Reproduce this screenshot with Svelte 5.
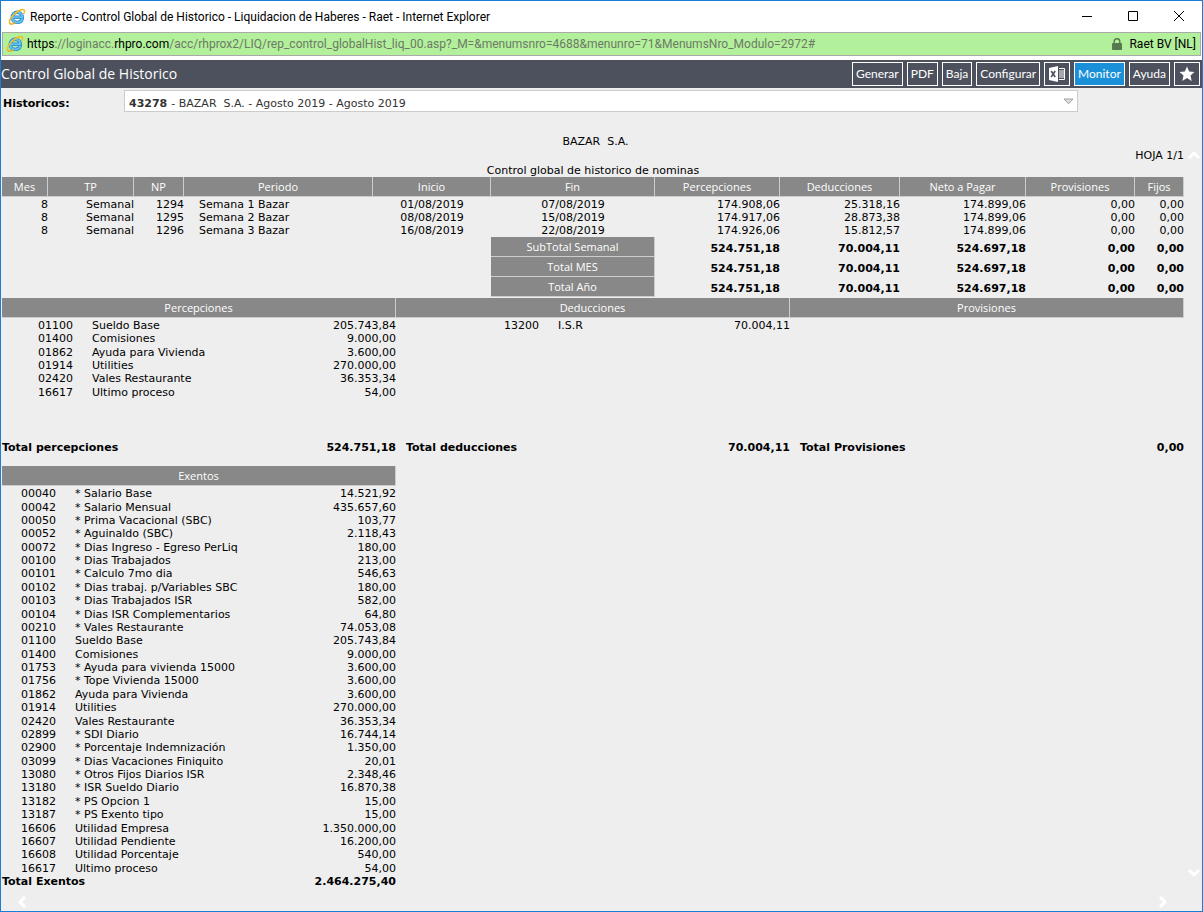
<script>
  const columns = [
    { name: 'Mes', width: 46 },
    { name: 'TP', width: 86 },
    { name: 'NP', width: 50 },
    { name: 'Periodo', width: 189 },
    { name: 'Inicio', width: 118 },
    { name: 'Fin', width: 164 },
    { name: 'Percepciones', width: 125 },
    { name: 'Deducciones', width: 120 },
    { name: 'Neto a Pagar', width: 126 },
    { name: 'Provisiones', width: 109 },
    { name: 'Fijos', width: 49 },
  ];

  const periods = [
    ['8', 'Semanal', '1294', 'Semana 1 Bazar', '01/08/2019', '07/08/2019', '174.908,06', '25.318,16', '174.899,06', '0,00', '0,00'],
    ['8', 'Semanal', '1295', 'Semana 2 Bazar', '08/08/2019', '15/08/2019', '174.917,06', '28.873,38', '174.899,06', '0,00', '0,00'],
    ['8', 'Semanal', '1296', 'Semana 3 Bazar', '16/08/2019', '22/08/2019', '174.926,06', '15.812,57', '174.899,06', '0,00', '0,00'],
  ];

  const totals = ['SubTotal Semanal', 'Total MES', 'Total Año'];
  const totalValues = ['524.751,18', '70.004,11', '524.697,18', '0,00', '0,00'];

  const groups = [
    {
      name: 'Percepciones',
      kind: 'perc',
      rows: [
        ['01100', 'Sueldo Base', '205.743,84'],
        ['01400', 'Comisiones', '9.000,00'],
        ['01862', 'Ayuda para Vivienda', '3.600,00'],
        ['01914', 'Utilities', '270.000,00'],
        ['02420', 'Vales Restaurante', '36.353,34'],
        ['16617', 'Ultimo proceso', '54,00'],
      ],
      label: 'Total percepciones',
      total: '524.751,18',
    },
    {
      name: 'Deducciones',
      kind: 'dedu',
      rows: [['13200', 'I.S.R', '70.004,11']],
      label: 'Total deducciones',
      total: '70.004,11',
    },
    { name: 'Provisiones', kind: 'prov', rows: [], label: 'Total Provisiones', total: '0,00' },
  ];

  const exempt = [
    ['00040', '* Salario Base', '14.521,92'],
    ['00042', '* Salario Mensual', '435.657,60'],
    ['00050', '* Prima Vacacional (SBC)', '103,77'],
    ['00052', '* Aguinaldo (SBC)', '2.118,43'],
    ['00072', '* Dias Ingreso - Egreso PerLiq', '180,00'],
    ['00100', '* Dias Trabajados', '213,00'],
    ['00101', '* Calculo 7mo dia', '546,63'],
    ['00102', '* Dias trabaj. p/Variables SBC', '180,00'],
    ['00103', '* Dias Trabajados ISR', '582,00'],
    ['00104', '* Dias ISR Complementarios', '64,80'],
    ['00210', '* Vales Restaurante', '74.053,08'],
    ['01100', 'Sueldo Base', '205.743,84'],
    ['01400', 'Comisiones', '9.000,00'],
    ['01753', '* Ayuda para vivienda 15000', '3.600,00'],
    ['01756', '* Tope Vivienda 15000', '3.600,00'],
    ['01862', 'Ayuda para Vivienda', '3.600,00'],
    ['01914', 'Utilities', '270.000,00'],
    ['02420', 'Vales Restaurante', '36.353,34'],
    ['02899', '* SDI Diario', '16.744,14'],
    ['02900', '* Porcentaje Indemnización', '1.350,00'],
    ['03099', '* Dias Vacaciones Finiquito', '20,01'],
    ['13080', '* Otros Fijos Diarios ISR', '2.348,46'],
    ['13180', '* ISR Sueldo Diario', '16.870,38'],
    ['13182', '* PS Opcion 1', '15,00'],
    ['13187', '* PS Exento tipo', '15,00'],
    ['16606', 'Utilidad Empresa', '1.350.000,00'],
    ['16607', 'Utilidad Pendiente', '16.200,00'],
    ['16608', 'Utilidad Porcentaje', '540,00'],
    ['16617', 'Ultimo proceso', '54,00'],
  ];
</script>

{#snippet browserIcon()}
  <svg class="browser" width="18" height="18" viewBox="0 0 18 18" aria-hidden="true">
    <path d="M14.300 10.800c-.6 2.300-2.500 3.600-5 3.600-3 0-5-2-5-5s2.100-5.200 5-5.200c2.900 0 4.800 2 4.900 5H4.800" fill="none" stroke="#2583c9" stroke-width="3.400" />
    <path d="M14.300 10.800c-.6 2.300-2.500 3.600-5 3.600-3 0-5-2-5-5s2.100-5.200 5-5.200c2.900 0 4.800 2 4.900 5H4.800" fill="none" stroke="#62c3f3" stroke-width="2" />
    <path d="M2.300 15.800C.4 14.600 2 10.200 5.900 6.500 10 2.600 14.900.4 16.200 2c.6.700.4 2-.3 3.500" fill="none" stroke="#f7bd1d" stroke-width="1.600" stroke-linecap="round" />
    <path d="M2.300 15.800c.9.700 2.800.2 4.700-.9" fill="none" stroke="#e9a90f" stroke-width="1.400" stroke-linecap="round" />
  </svg>
{/snippet}

{#snippet chevron(d, label)}
  <button class="chevron" aria-label={label}>
    <svg width="12" height="12" viewBox="0 0 12 12" aria-hidden="true">
      <path {d} fill="none" stroke="#fff" stroke-width="3" />
    </svg>
  </button>
{/snippet}

<div class="window">
  <header class="titlebar">
    {@render browserIcon()}
    <span class="title">Reporte - Control Global de Historico - Liquidacion de Haberes - Raet - Internet Explorer</span>
    <div class="controls">
      <button aria-label="Minimizar">
        <svg width="12" height="12" viewBox="0 0 12 12"><path d="M1 5.500h10" stroke="#000" /></svg>
      </button>
      <button aria-label="Maximizar">
        <svg width="12" height="12" viewBox="0 0 12 12"><path d="M1.500 .5h9v9h-9z" fill="none" stroke="#000" /></svg>
      </button>
      <button aria-label="Cerrar">
        <svg width="12" height="12" viewBox="0 0 12 12"><path d="M1 0l10 10M11 0L1 10" stroke="#000" /></svg>
      </button>
    </div>
  </header>

  <div class="address">
    {@render browserIcon()}
    <span class="url"><span class="strong">https</span>://loginacc.<span class="strong">rhpro.com</span>/acc/rhprox2/LIQ/rep_control_globalHist_liq_00.asp?_M=&amp;menumsnro=4688&amp;menunro=71&amp;MenumsNro_Modulo=2972#</span>
    <svg class="lock" width="10" height="12" viewBox="0 0 10 12" aria-hidden="true">
      <path d="M2.200 6V3.500a2.800 2.800 0 0 1 5.600 0V6" fill="none" stroke="#57794f" stroke-width="1.400" />
      <rect x="0" y="5" width="10" height="7" rx="1" fill="#57794f" />
    </svg>
    <span class="cert">Raet BV [NL]</span>
  </div>

  <nav class="toolbar">
    <h1>Control Global de Historico</h1>
    <button>Generar</button>
    <button>PDF</button>
    <button>Baja</button>
    <button>Configurar</button>
    <button class="icon" aria-label="Excel">
      <svg width="18" height="16" viewBox="0 0 18 16" aria-hidden="true">
        <path d="M1 2l9-2v16l-9-2z" fill="#fff" />
        <path d="M3.200 5l4 6M7.200 5l-4 6" stroke="#4d515d" stroke-width="1.600" />
        <path d="M11 2.500h5.500v11H11" fill="none" stroke="#fff" />
        <path d="M11 5h5M11 7h5M11 9h5M11 11h5" stroke="#fff" stroke-width="1" />
      </svg>
    </button>
    <button class="active">Monitor</button>
    <button>Ayuda</button>
    <button class="icon" aria-label="Favoritos">
      <svg width="16" height="16" viewBox="0 0 16 16" aria-hidden="true">
        <path d="M8 .5l2.200 5 5.300.5-4 3.600 1.200 5.400L8 12.100 3.300 15l1.200-5.400-4-3.600 5.300-.5z" fill="#fff" />
      </svg>
    </button>
  </nav>

  <form class="filter">
    <label for="historicos">Historicos:</label>
    <div class="picker">
      <b>43278</b>
      <select id="historicos">
        <option>- BAZAR&nbsp; S.A. - Agosto 2019 - Agosto 2019</option>
      </select>
      <svg width="11" height="7" viewBox="0 0 11 7" aria-hidden="true">
        <path d="M1 1h9L5.500 5.800z" fill="#ddd" stroke="#999" stroke-width=".9" />
      </svg>
    </div>
  </form>

  <div class="viewport">
    <main class="report">
      <p class="company">BAZAR&nbsp; S.A.</p>
      <p class="sheet">HOJA 1/1</p>

      <table class="summary">
        <caption>Control global de historico de nominas</caption>
        <colgroup>
          {#each columns as column}
            <col style:width="{column.width}px" />
          {/each}
        </colgroup>
        <thead>
          <tr>
            {#each columns as column}<th>{column.name}</th>{/each}
          </tr>
        </thead>
        <tbody>
          {#each periods as row}
            <tr>
              {#each row as cell, i}
                <td class:period={i === 3} class:date={i === 4 || i === 5}>{cell}</td>
              {/each}
            </tr>
          {/each}
        </tbody>
        <tfoot>
          {#each totals as label}
            <tr>
              <td colspan="5"></td>
              <th>{label}</th>
              {#each totalValues as value}<td>{value}</td>{/each}
            </tr>
          {/each}
        </tfoot>
      </table>

      <div class="groups">
        {#each groups as group}
          <section class={group.kind}>
            <h2>{group.name}</h2>
            <div class="lines">
              {#if group.rows.length}
                <table class="concepts">
                  <tbody>
                    {#each group.rows as [code, name, amount]}
                      <tr><td class="code">{code}</td><td class="name">{name}</td><td class="amount">{amount}</td></tr>
                    {/each}
                  </tbody>
                </table>
              {/if}
            </div>
            <div class="total"><span>{group.label}</span><span>{group.total}</span></div>
          </section>
        {/each}

        <section class="exempt">
          <h2>Exentos</h2>
          <table class="concepts">
            <tbody>
              {#each exempt as [code, name, amount]}
                <tr><td class="code">{code}</td><td class="name">{name}</td><td class="amount">{amount}</td></tr>
              {/each}
            </tbody>
          </table>
          <div class="total"><span>Total Exentos</span><span>2.464.275,40</span></div>
        </section>
      </div>
    </main>

    <div class="rail vertical">
      {@render chevron('M1 9l5-5 5 5', 'Subir')}
      {@render chevron('M1 3l5 5 5-5', 'Bajar')}
    </div>
    <div class="rail horizontal">
      {@render chevron('M9 1L4 6l5 5', 'Izquierda')}
      {@render chevron('M3 1l5 5-5 5', 'Derecha')}
    </div>
  </div>
</div>

<style>
  :global(body) {
    margin: 0;
  }

  .window {
    box-sizing: border-box;
    min-height: 100vh;
    display: flex;
    flex-direction: column;
    border: 1px solid #1a7fd4;
    background: #fff;
    color: #000;
    font: 11px/13px 'DejaVu Sans', Verdana, sans-serif;
  }

  button {
    margin: 0;
    padding: 0;
    border: 0;
    background: none;
    font: inherit;
    color: inherit;
  }

  svg {
    display: block;
    flex: none;
  }

  .titlebar {
    display: flex;
    align-items: center;
    height: 31px;
    padding-left: 7px;
    font: 12px/16px Roboto, 'Segoe UI', sans-serif;
  }

  .title {
    margin-left: 4px;
    flex: 1;
    white-space: nowrap;
  }

  .controls {
    display: flex;
  }

  .controls button {
    width: 46px;
    height: 30px;
    display: grid;
    place-items: center;
  }

  .address {
    display: flex;
    align-items: center;
    height: 22px;
    margin: 0 1px 4px;
    padding: 0 4px 0 3px;
    border: 1px solid #aaa;
    background: #b3f09c;
    color: #6c7a66;
    font: 12px/16px Roboto, 'Segoe UI', sans-serif;
  }

  .url {
    flex: 1;
    margin-left: 3px;
    white-space: nowrap;
  }

  .strong,
  .cert {
    color: #000;
  }

  .cert {
    margin-left: 7px;
  }

  .toolbar {
    display: flex;
    align-items: center;
    gap: 4px;
    height: 28px;
    padding-right: 2px;
    background: #4d515d;
    color: #fff;
    font: 12px/22px Lato, 'Segoe UI', sans-serif;
  }

  .toolbar h1 {
    flex: 1;
    margin: 0;
    font: 14px/22px 'Open Sans', 'Segoe UI', sans-serif;
  }

  .toolbar button {
    display: grid;
    place-items: center;
    height: 24px;
    padding: 0 3px;
    border: 1px solid #fff;
  }

  .toolbar .icon {
    width: 26px;
  }

  .toolbar .active {
    background: #1a90d9;
  }

  .filter {
    display: flex;
    align-items: center;
    padding: 2px 124px 0 2px;
    background: #eee;
  }

  .filter label {
    width: 121px;
    padding-top: 4px;
    font-weight: 700;
  }

  .picker {
    flex: 1;
    display: flex;
    align-items: center;
    height: 20px;
    padding: 0 3px 0 4px;
    border: 1px solid #ccc;
    background: #fff;
    color: #333;
  }

  .picker b,
  .picker select {
    padding-top: 4px;
  }

  .picker select {
    flex: 1;
    appearance: none;
    margin: 0;
    padding-left: 4px;
    padding-right: 0;
    padding-bottom: 0;
    border: 0;
    background: none;
    color: inherit;
    font: inherit;
  }

  .viewport {
    flex: 1;
    display: grid;
    grid-template-columns: 1fr 19px;
    grid-template-rows: auto 1fr;
    background: #eee;
  }

  .report {
    padding: 23px 0 0 1px;
  }

  .report p {
    margin: 0;
  }

  .company {
    padding-left: 5px;
    text-align: center;
  }

  .report .sheet {
    margin-top: 1px;
    text-align: right;
  }

  table {
    width: 100%;
    border-collapse: separate;
    border-spacing: 0;
  }

  td,
  th {
    padding: 0;
    white-space: nowrap;
  }

  .summary {
    table-layout: fixed;
    margin-top: 2px;
  }

  .summary td {
    text-align: right;
  }

  .summary tbody td {
    height: 13px;
  }

  .summary tbody tr:first-child td {
    height: 14px;
  }

  .summary td.period {
    padding-left: 15px;
    text-align: left;
  }

  .summary td.date {
    text-align: center;
  }

  .summary th,
  h2 {
    box-sizing: border-box;
    height: 20px;
    border: solid #ccc;
    border-width: 0 1px 1px 0;
    background: #888;
    color: #fff;
    font: 11px/19px 'Open Sans', 'Segoe UI', sans-serif;
    text-align: center;
  }

  .summary tfoot td,
  .total {
    font-weight: 700;
  }

  .summary tfoot td {
    padding-top: 2px;
  }

  .groups {
    display: grid;
    grid-template-columns: repeat(3, 1fr);
    margin-top: 1px;
  }

  h2 {
    margin: 0 0 1px;
  }

  .lines {
    height: 122px;
  }

  .concepts .code {
    text-align: right;
  }

  .concepts .name {
    padding-left: 19px;
  }

  .concepts .amount {
    text-align: right;
  }

  .perc .concepts {
    height: 80px;
  }

  .perc .code {
    width: 71px;
  }

  .dedu .code {
    width: 143px;
  }

  .exempt .code {
    width: 54px;
  }

  .exempt .concepts {
    height: 388px;
  }

  .total {
    display: flex;
    justify-content: space-between;
  }

  .dedu .total,
  .prov .total {
    padding-left: 10px;
  }

  .exempt {
    grid-column: 1;
    margin-top: 12px;
  }

  .rail {
    display: flex;
    justify-content: space-between;
  }

  .vertical {
    flex-direction: column;
    align-items: center;
    padding: 37px 0 9px;
  }

  .horizontal {
    align-items: flex-start;
    padding: 8px 15px 0;
  }
</style>
